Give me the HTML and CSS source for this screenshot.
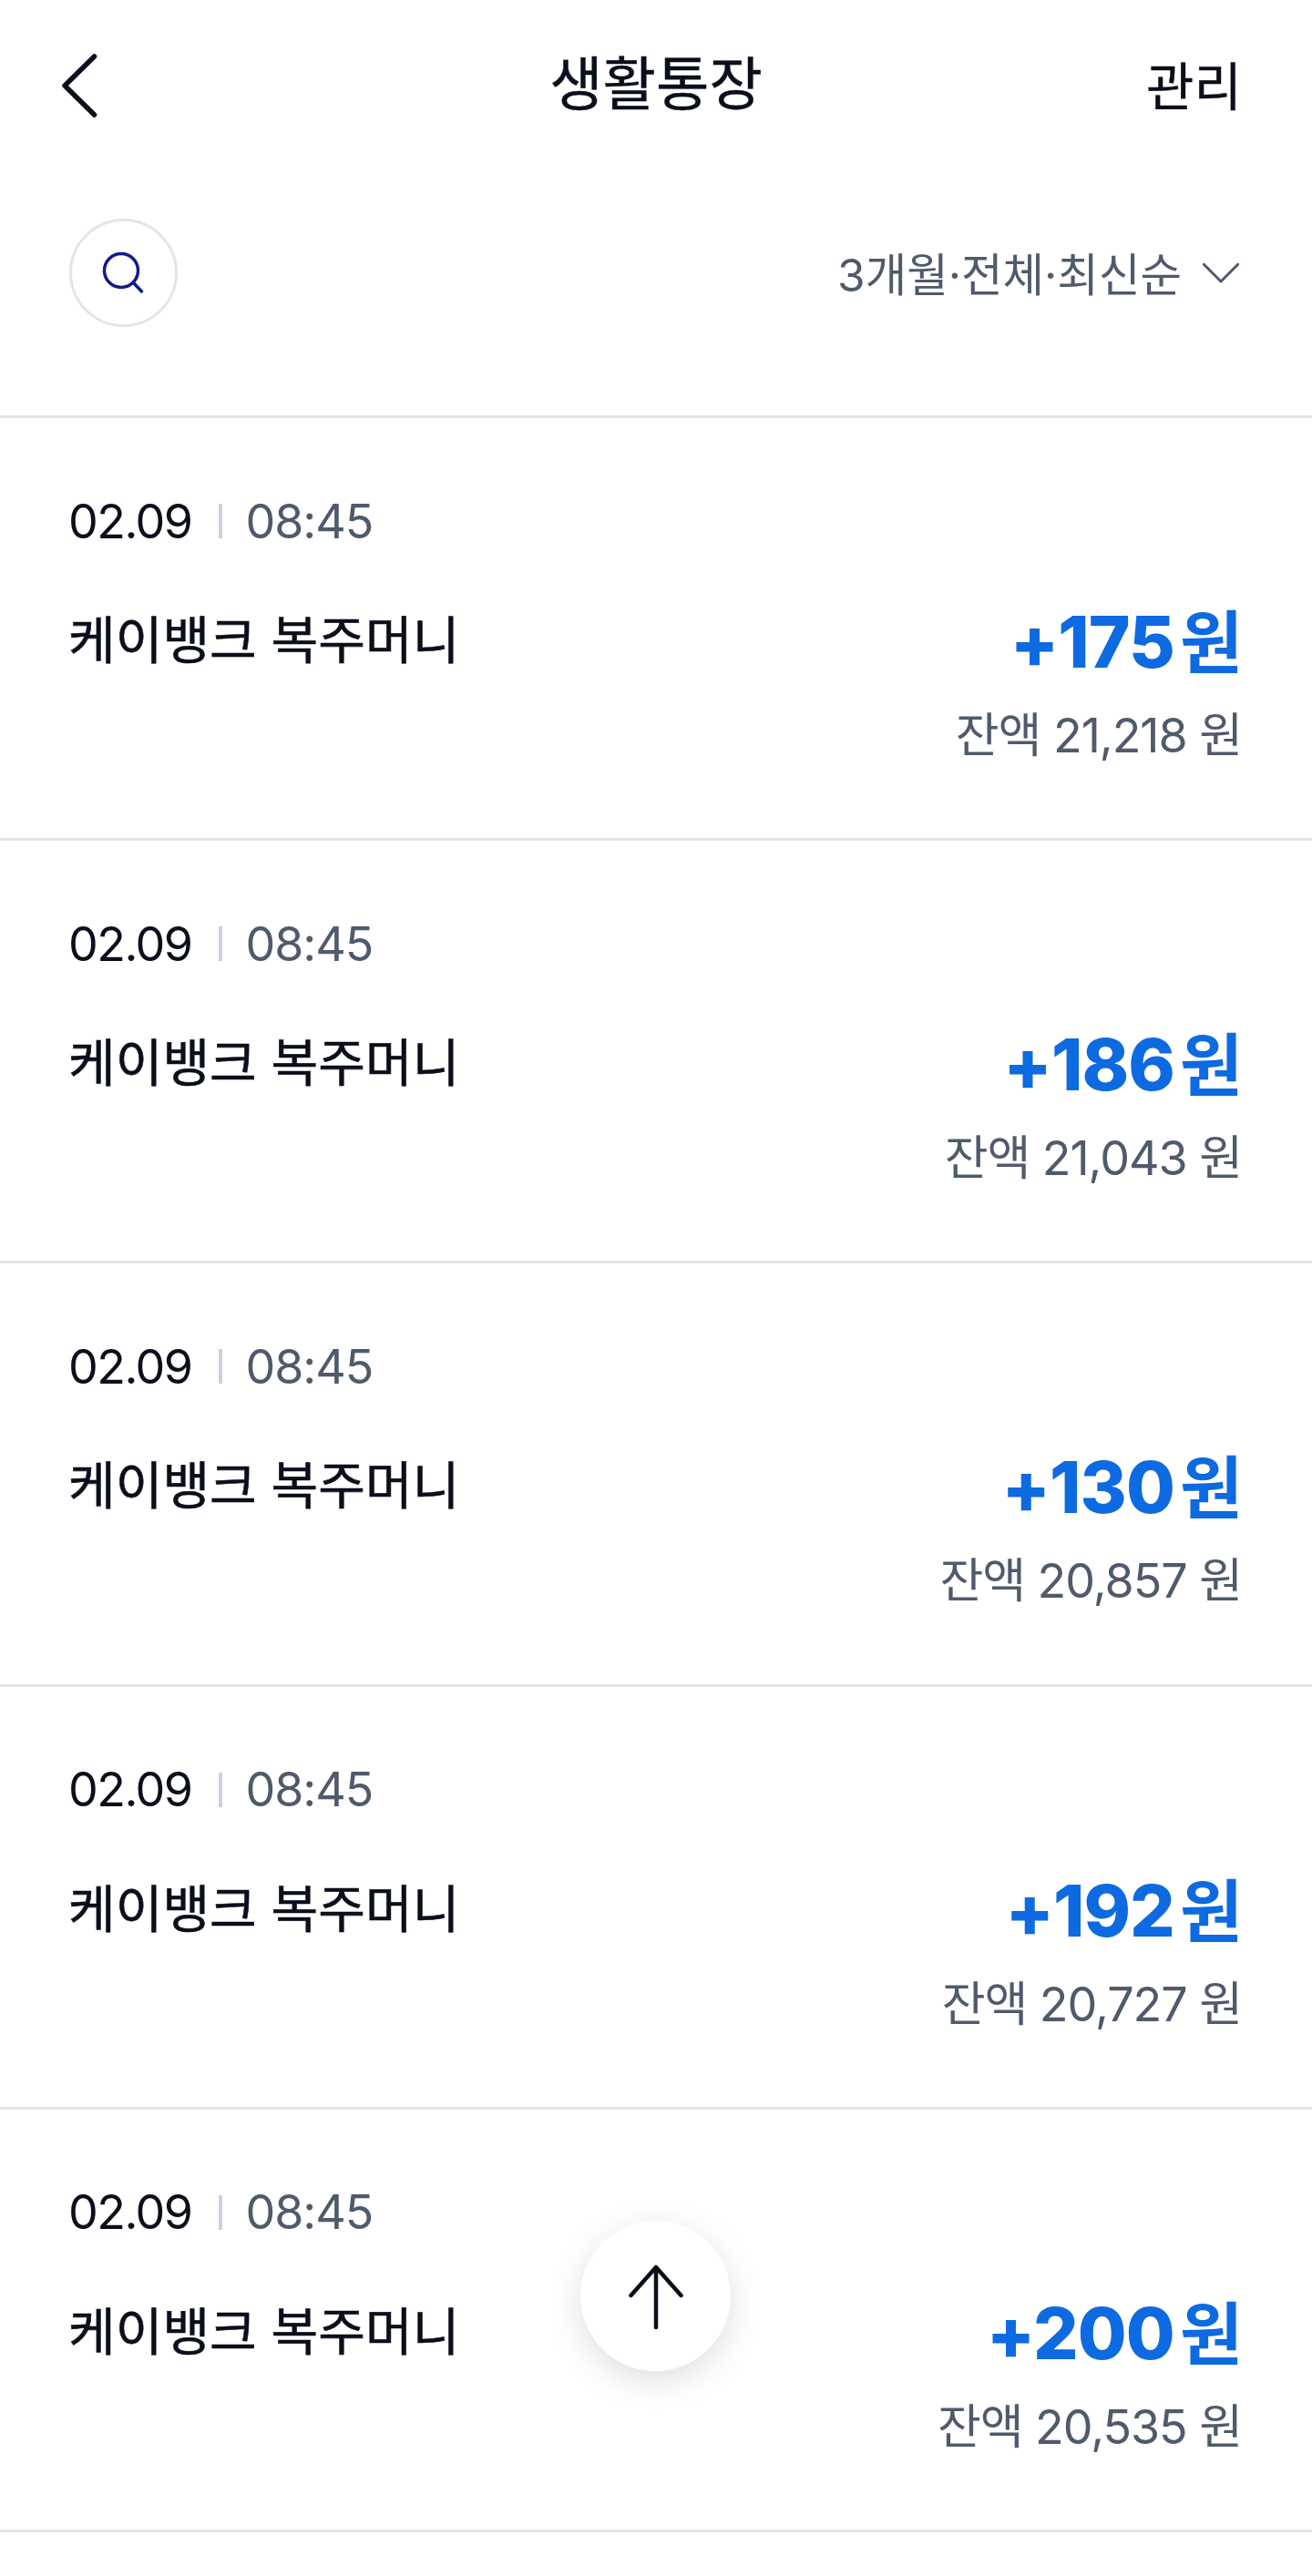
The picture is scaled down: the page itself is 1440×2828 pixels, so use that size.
FILE: index.html
```html
<!DOCTYPE html>
<html lang="ko">
<head>
    <meta charset="UTF-8">
    <meta name="viewport" content="width=device-width, initial-scale=1.0">
    <title>생활통장</title>
    <link rel="stylesheet" href="styles.css">
</head>
<body>
    <div class="page">
        <header class="top-bar">
            <a class="back-btn" href="#" aria-label="뒤로">
                <svg width="44" height="72" viewBox="0 0 44 72"><path d="M37.500 4 L5 36 L37.500 68"/></svg>
            </a>
            <h1>생활통장</h1>
            <a class="manage" href="#">관리</a>
        </header>

        <div class="toolbar">
            <button class="search-btn" type="button" aria-label="검색">
                <svg width="48" height="48" viewBox="0 0 48 48"><circle cx="21" cy="21" r="18.500"/><path d="M34.500 34.500 L43.500 44"/></svg>
            </button>
            <button class="filter" type="button">
                <span>3개월·전체·최신순</span>
                <svg width="40" height="22" viewBox="0 0 40 22"><path d="M1 1 L20 20 L39 1"/></svg>
            </button>
        </div>

        <ul class="tx-list">
            <li class="tx">
                <div class="tx-when"><span>02.09</span><i></i><time>08:45</time></div>
                <div class="tx-body">
                    <div class="tx-name">케이뱅크 복주머니</div>
                    <div class="tx-money">
                        <div class="amount">+175<span>원</span></div>
                        <div class="balance">잔액 21,218 원</div>
                    </div>
                </div>
            </li>
            <li class="tx">
                <div class="tx-when"><span>02.09</span><i></i><time>08:45</time></div>
                <div class="tx-body">
                    <div class="tx-name">케이뱅크 복주머니</div>
                    <div class="tx-money">
                        <div class="amount">+186<span>원</span></div>
                        <div class="balance">잔액 21,043 원</div>
                    </div>
                </div>
            </li>
            <li class="tx">
                <div class="tx-when"><span>02.09</span><i></i><time>08:45</time></div>
                <div class="tx-body">
                    <div class="tx-name">케이뱅크 복주머니</div>
                    <div class="tx-money">
                        <div class="amount">+130<span>원</span></div>
                        <div class="balance">잔액 20,857 원</div>
                    </div>
                </div>
            </li>
            <li class="tx">
                <div class="tx-when"><span>02.09</span><i></i><time>08:45</time></div>
                <div class="tx-body">
                    <div class="tx-name">케이뱅크 복주머니</div>
                    <div class="tx-money">
                        <div class="amount">+192<span>원</span></div>
                        <div class="balance">잔액 20,727 원</div>
                    </div>
                </div>
            </li>
            <li class="tx">
                <div class="tx-when"><span>02.09</span><i></i><time>08:45</time></div>
                <div class="tx-body">
                    <div class="tx-name">케이뱅크 복주머니</div>
                    <div class="tx-money">
                        <div class="amount">+200<span>원</span></div>
                        <div class="balance">잔액 20,535 원</div>
                    </div>
                </div>
            </li>
        </ul>

        <button class="to-top" type="button" aria-label="맨 위로">
            <svg width="64" height="72" viewBox="0 0 64 72"><path d="M32 70 V4 M4.500 35 L32 4 L59.500 35"/></svg>
        </button>
    </div>
</body>
</html>
```

FILE: styles.css
```css
* { box-sizing: border-box; }
html, body { margin: 0; padding: 0; background: #fff; }
body { font-family: Inter, "Noto Sans CJK KR", sans-serif; color: #0b0f1c; }
.page { position: relative; width: 1440px; height: 2828px; overflow: hidden; }

.top-bar { height: 184px; padding: 0 77px 0 66px; display: flex; justify-content: space-between; align-items: center; position: relative; }
.back-btn { display: block; line-height: 0; margin-top: 4px; }
.back-btn svg { fill: none; stroke: #0b0f1c; stroke-width: 5.500; stroke-linecap: round; stroke-linejoin: round; }
.top-bar h1 { position: absolute; left: 0; right: 0; margin: 0; text-align: center; font-size: 63.500px; font-weight: 400; line-height: 182px; -webkit-text-stroke: 0.4px #0b0f1c; }
.manage { color: #0b0f1c; text-decoration: none; font-size: 57px; font-weight: 400; margin-top: -3px; -webkit-text-stroke: 0.4px #0b0f1c; }

.toolbar { height: 275px; padding: 56px 80px 0 76px; display: flex; justify-content: space-between; align-items: flex-start; border-bottom: 3px solid #e1e4e9; }
.search-btn { width: 119px; height: 119px; border: 3px solid #e1e5ec; border-radius: 50%; background: #fff; padding: 0; display: flex; justify-content: center; align-items: center; }
.search-btn svg { fill: none; stroke: #101c8c; stroke-width: 3.500; stroke-linecap: round; }
.filter { height: 119px; border: 0; background: none; padding: 0; display: flex; align-items: center; gap: 23px; font-family: inherit; font-size: 49.500px; color: #4f5a6b; }
.filter span { margin-top: -2px; }
.filter svg { fill: none; stroke: #4f5a6b; stroke-width: 3; stroke-linecap: round; stroke-linejoin: round; }

.tx-list { list-style: none; margin: 0; padding: 0; }
.tx { height: 464.200px; padding: 88px 77px 0 75px; border-bottom: 3px solid #e1e4e9; }
.tx-when { display: flex; align-items: center; height: 50px; font-size: 52px; letter-spacing: -0.03em; }
.tx-when i { width: 4px; height: 38px; background: #c9d1dc; margin: 0 25px 0 30px; }
.tx-when time { color: #4f5a6b; letter-spacing: -0.02em; }
.tx-body { display: flex; justify-content: space-between; align-items: flex-start; margin-top: 58px; }
.tx-name { font-size: 56.200px; line-height: 76px; margin-top: 10px; -webkit-text-stroke: 0.6px #0b0f1c; }
.tx-money { text-align: right; }
.amount { font-size: 78px; font-weight: 800; color: #0e6ae0; line-height: 100px; letter-spacing: -0.012em; }
.amount span { font-size: 75px; font-weight: 700; margin-left: 6px; }
.balance { font-size: 52px; color: #4f5a6b; line-height: 64px; margin-top: 20px; letter-spacing: -0.02em; }

/* floating scroll-to-top */
.to-top { position: absolute; left: 637px; top: 2438px; width: 165px; height: 165px; border: 0; border-radius: 50%; background: #fff; box-shadow: 0 10px 36px rgba(0, 0, 0, 0.13); padding: 0; display: flex; justify-content: center; align-items: center; }
.to-top svg { fill: none; stroke: #0b0f1c; stroke-width: 4.500; stroke-linecap: round; stroke-linejoin: round; }
```
